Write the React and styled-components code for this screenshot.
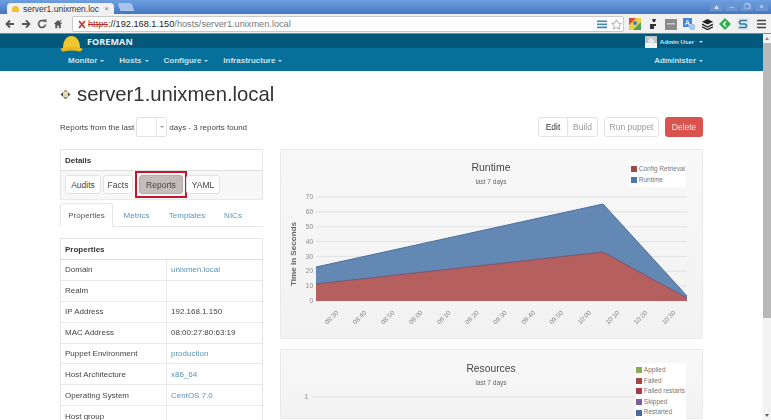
import React from 'react';
import styled, { createGlobalStyle } from 'styled-components';

const GlobalStyle = createGlobalStyle`
  html, body {
    margin: 0;
    height: 100%;
    overflow: hidden;
    background: #fff;
  }
  body {
    font-family: "Liberation Sans", Arial, sans-serif;
    color: #444;
  }
  * { box-sizing: border-box; }
`;

const Window = styled.div`
  width: 771px;
  height: 420px;
  display: flex;
  flex-direction: column;
  overflow: hidden;
  filter: blur(0.35px);
`;

const TabStrip = styled.div`
  height: 14px;
  flex: none;
  display: flex;
  align-items: flex-end;
  justify-content: space-between;
  padding-left: 7px;
  background: linear-gradient(#6e9fe0, #4577c0);
`;

const Tab = styled.div`
  width: 107px;
  height: 11px;
  padding: 0 5px;
  display: flex;
  align-items: center;
  gap: 4px;
  background: #f1f1f1;
  border-radius: 4px 4px 0 0;
  font-size: 8.5px;
  color: #333;
  white-space: nowrap;
  overflow: hidden;
`;

const Favicon = styled.span`
  width: 7px;
  height: 6px;
  flex: none;
  border-radius: 4px 4px 1px 1px;
  background: #f0c030;
`;

const TabTitle = styled.span`
  flex: 1;
  overflow: hidden;
`;

const TabClose = styled.span`
  color: #777;
  font-size: 8px;
`;

const NewTab = styled.div`
  width: 14px;
  height: 8px;
  margin-left: 5px;
  margin-bottom: 3px;
  background: #a9c4ec;
  border-radius: 2px 2px 0 0;
  transform: skewX(20deg);
`;

const TabGroup = styled.div`
  display: flex;
  align-items: flex-end;
`;

const WindowButtons = styled.div`
  display: flex;
  align-self: flex-start;
  gap: 2px;
  margin: 3px 3px 0 0;
`;

const WindowButton = styled.span`
  width: 13px;
  height: 8px;
  display: flex;
  align-items: center;
  justify-content: center;
  font-size: 7px;
  line-height: 8px;
  color: #dfe9f8;
  background: #6a94d2;
`;

const Toolbar = styled.div`
  height: 20px;
  flex: none;
  display: flex;
  align-items: center;
  padding: 1px 0 0 5px;
  background: #f1f1f1;
  border-bottom: 1px solid #6f8bb0;
`;

const NavIcons = styled.div`
  display: flex;
  align-items: center;
  gap: 6px;
  width: 67px;
  flex: none;
`;

const Omnibox = styled.div`
  width: 552px;
  height: 16px;
  flex: none;
  padding: 0 1px 0 5px;
  display: flex;
  align-items: center;
  background: #fff;
  border: 1px solid #c9c9c9;
  border-radius: 2px;
  font-size: 9.2px;
  white-space: nowrap;
`;

const Scheme = styled.span`
  color: #b03030;
  text-decoration: line-through;
  margin-left: 2px;
`;

const Host = styled.span`
  color: #222;
`;

const PathText = styled.span`
  color: #777;
  flex: 1;
`;

const OmniIcons = styled.div`
  display: flex;
  align-items: center;
  gap: 3px;
`;

const Extensions = styled.div`
  display: flex;
  align-items: center;
  padding-left: 2px;
`;

const ExtensionSlot = styled.span`
  width: 18px;
  display: flex;
  align-items: center;
  justify-content: center;
`;

const Body = styled.div`
  flex: 1;
  min-height: 0;
  display: flex;
`;

const Page = styled.div`
  flex: 1;
  min-width: 0;
  display: flex;
  flex-direction: column;
`;

const Scrollbar = styled.div`
  width: 8px;
  flex: none;
  display: flex;
  flex-direction: column;
  background: #f3f3f3;
`;

const ScrollArrow = styled.span`
  height: ${p => p.$h}px;
  flex: none;
  display: flex;
  align-items: center;
  justify-content: center;
`;

const ArrowGlyph = styled.span`
  width: 0;
  height: 0;
  border-left: 2.5px solid transparent;
  border-right: 2.5px solid transparent;
  ${p => (p.$up ? 'border-bottom: 3px solid #888;' : 'border-top: 3px solid #666;')}
`;

const ScrollThumb = styled.div`
  height: 275px;
  flex: none;
  background: #b9b9b9;
`;

const ScrollSpacer = styled.div`
  flex: 1;
`;

const TopBar = styled.div`
  height: 14px;
  flex: none;
  position: relative;
  display: flex;
  align-items: center;
  justify-content: space-between;
  padding: 0 60px 0 87px;
  background: #04587a;
  color: #e8f2f6;
  font-weight: bold;
`;

const Brand = styled.span`
  font-family: "Open Sans", sans-serif;
  font-size: 9px;
  letter-spacing: 0.1px;
`;

const HardHat = styled.svg`
  position: absolute;
  left: 60px;
  top: 1px;
  width: 23px;
  height: 19px;
`;

const UserMenu = styled.div`
  display: flex;
  align-items: center;
  font-size: 6.1px;
  gap: 3px;
  color: #cfe3ec;
`;

const Avatar = styled.span`
  width: 12px;
  height: 12px;
  margin-top: 1px;
  background: radial-gradient(circle at 50% 40%, #e6e6e6 28%, transparent 30%), linear-gradient(#bfc6c9 55%, #f2f2f2 55%);
`;

const Caret = styled.span`
  width: 0;
  height: 0;
  margin-left: ${p => p.$gap || 3}px;
  display: inline-block;
  vertical-align: middle;
  border-left: 2.5px solid transparent;
  border-right: 2.5px solid transparent;
  border-top: 2.5px solid ${p => p.$color || 'currentColor'};
`;

const NavBar = styled.div`
  height: 23px;
  flex: none;
  display: flex;
  align-items: center;
  justify-content: space-between;
  padding: 2px 60px 0 68px;
  background: #06709b;
  font-size: 8px;
  font-weight: bold;
  color: #c9e0ea;
`;

const NavGroup = styled.div`
  display: flex;
  gap: 15px;
`;

const Content = styled.div`
  flex: 1;
  min-height: 0;
  padding: 0 60px;
  overflow: hidden;
`;

const TitleRow = styled.h1`
  margin: 0;
  height: 41px;
  padding-top: 5px;
  display: flex;
  align-items: center;
  gap: 6px;
  font-size: 20.3px;
  font-weight: normal;
  color: #333;
`;

const HostIcon = styled.svg`
  width: 11px;
  height: 11px;
  flex: none;
`;

const ActionRow = styled.div`
  height: 30px;
  margin-bottom: 7px;
  display: flex;
  align-items: center;
  justify-content: space-between;
  font-size: 8px;
  color: #444;
`;

const Filter = styled.div`
  display: flex;
  align-items: center;
  gap: 2px;
`;

const DaysSelect = styled.div`
  width: 31px;
  height: 20px;
  display: flex;
  justify-content: flex-end;
  background: #fff;
  border: 1px solid #e2e2e2;
  border-radius: 2px;
`;

const DaysArrow = styled.span`
  width: 10px;
  display: flex;
  align-items: center;
  justify-content: center;
  border-left: 1px solid #e6e6e6;
  color: #999;
`;

const Actions = styled.div`
  display: flex;
  gap: 6px;
`;

const ButtonGroup = styled.div`
  display: flex;
  height: 20px;
  border: 1px solid #e2e2e2;
  border-radius: 3px;
`;

const ActionButton = styled.span`
  width: ${p => p.$w}px;
  display: flex;
  align-items: center;
  justify-content: center;
  font-size: 8.5px;
  color: ${p => (p.$dim ? '#999' : '#333')};
  & + & { border-left: 1px solid #e2e2e2; }
`;

const DeleteButton = styled.span`
  height: 20px;
  width: 38px;
  display: flex;
  align-items: center;
  justify-content: center;
  font-size: 8.5px;
  color: #fbe3e2;
  background: #d9534f;
  border-radius: 3px;
`;

const Columns = styled.div`
  display: flex;
  gap: 17px;
`;

const LeftColumn = styled.div`
  width: 203px;
  flex: none;
`;

const RightColumn = styled.div`
  width: 423px;
  flex: none;
  display: flex;
  flex-direction: column;
  gap: 10px;
`;

const DetailsPanel = styled.div`
  border: 1px solid #e6e6e6;
  border-bottom: 0;
`;

const DetailsHeader = styled.div`
  height: 21px;
  padding: 0 4px;
  display: flex;
  align-items: center;
  font-size: 8px;
  font-weight: bold;
  color: #333;
  border-bottom: 1px solid #ddd;
`;

const DetailsButtons = styled.div`
  height: 29px;
  padding: 4px;
  display: flex;
  background: #f7f7f7;
  border-bottom: 1px solid #eaeaea;
`;

const SmallButton = styled.span`
  height: 19px;
  position: relative;
  display: flex;
  align-items: center;
  justify-content: center;
  width: ${p => p.$w}px;
  margin-right: ${p => p.$gap || 0}px;
  font-size: 8.5px;
  color: #444;
  background: #fff;
  border: 1px solid #e2e2e2;
  border-radius: 3px;
  ${p => p.$active && `
    background: #c4bcbc;
    border-color: #b5adad;
    &::after {
      content: '';
      position: absolute;
      inset: -5px;
      border: 2.5px solid #c5162e;
    }
  `}
`;

const Tabs = styled.div`
  height: 24px;
  margin-top: 3px;
  display: flex;
  font-size: 8px;
  border-bottom: 1px solid #e6e6e6;
`;

const TabItem = styled.span`
  height: 24px;
  width: ${p => p.$w}px;
  display: flex;
  align-items: center;
  justify-content: center;
  color: ${p => (p.$active ? '#555' : '#5a93b8')};
  ${p => p.$active && `
    background: #fff;
    border: 1px solid #e6e6e6;
    border-bottom-color: #fff;
    border-radius: 3px 3px 0 0;
  `}
`;

const PropsTable = styled.div`
  margin-top: 11px;
  border: 1px solid #e6e6e6;
  border-bottom: 0;
  font-size: 8px;
`;

const PropsHeader = styled.div`
  height: 21px;
  padding: 0 4px;
  display: flex;
  align-items: center;
  font-weight: bold;
  color: #333;
  border-bottom: 1px solid #ddd;
`;

const PropRow = styled.div`
  height: 20.9px;
  display: grid;
  grid-template-columns: 106px 1fr;
  align-items: center;
  border-bottom: 1px solid #e9e9e9;
  color: #444;
`;

const PropName = styled.span`
  height: 100%;
  padding-left: 4px;
  display: flex;
  align-items: center;
  border-right: 1px solid #e9e9e9;
`;

const PropValue = styled.span`
  padding-left: 4px;
  color: ${p => (p.$link ? '#5a93b8' : '#444')};
`;

const ChartCard = styled.div`
  height: ${p => p.$h}px;
  flex: none;
  position: relative;
  background: linear-gradient(#f8f8f8, #f2f2f2);
  border: 1px solid #e9e9e9;
  border-radius: 2px;
`;

const ChartSvg = styled.svg`
  display: block;
  width: 421px;
  height: 100%;
  font-family: "Liberation Sans", Arial, sans-serif;
`;

const Legend = styled.div`
  position: absolute;
  top: ${p => p.$top}px;
  right: 16px;
  padding: 2px 1px;
  background: #fff;
  font-size: 6.5px;
  line-height: 10.6px;
  color: #777;
`;

const LegendRow = styled.div`
  display: flex;
  align-items: center;
  gap: 2px;
`;

const Swatch = styled.span`
  width: 6px;
  height: 6px;
  background: ${p => p.$color};
`;

const Link = styled.a`
  color: inherit;
  text-decoration: none;
`;

const NAV_LEFT = ['Monitor', 'Hosts', 'Configure', 'Infrastructure'];

const PROPS = [
  ['Domain', 'unixmen.local', true],
  ['Realm', ''],
  ['IP Address', '192.168.1.150'],
  ['MAC Address', '08:00:27:80:63:19'],
  ['Puppet Environment', 'production', true],
  ['Host Architecture', 'x86_64', true],
  ['Operating System', 'CentOS 7.0', true],
  ['Host group', ''],
];

const TICKS = ['08:30', '08:40', '08:50', '09:00', '09:10', '09:20', '09:30', '09:40', '09:50', '10:00', '10:10', '10:20', '10:30'];

function BackIcon({ flip }) {
  return (
    <svg width="10" height="10" viewBox="0 0 10 10" style={flip ? { transform: 'scaleX(-1)' } : undefined}>
      <path d="M9 5H2M5 1.5 1.5 5 5 8.5" fill="none" stroke="#555" strokeWidth="1.8" />
    </svg>
  );
}

function ReloadIcon() {
  return (
    <svg width="10" height="10" viewBox="0 0 10 10">
      <path d="M8.5 5.5A3.5 3.5 0 1 1 7.5 2.5" fill="none" stroke="#555" strokeWidth="1.6" />
      <path d="M6 0.5h3.5V4z" fill="#555" />
    </svg>
  );
}

function HomeIcon() {
  return (
    <svg width="10" height="10" viewBox="0 0 10 10">
      <path d="M5 1 0.8 5H2.3V9.3H4.2V6.5H5.8V9.3H7.7V5H9.2zM7 1.2H8.2V3.2L7 2.2z" fill="#555" />
    </svg>
  );
}

function ToolbarExtensions() {
  return (
    <Extensions>
      <ExtensionSlot>
        <svg width="12" height="12" viewBox="0 0 12 12">
          <rect width="12" height="12" fill="#e8d24a" />
          <path d="M0 0h7L0 7z" fill="#d9483b" />
          <path d="M12 12H4l8-8z" fill="#4aa656" />
          <circle cx="6" cy="5" r="2" fill="#4a78c9" />
        </svg>
      </ExtensionSlot>
      <ExtensionSlot>
        <svg width="10" height="12" viewBox="0 0 10 12">
          <path d="M4 1h4L7 4H5zM2 6h6v2H6v3H2V8z" fill="#333" />
        </svg>
      </ExtensionSlot>
      <ExtensionSlot>
        <svg width="12" height="11" viewBox="0 0 12 11">
          <rect width="12" height="11" fill="#8b8b8b" />
          <rect x="2" y="4" width="8" height="1.5" fill="#c9c9c9" />
        </svg>
      </ExtensionSlot>
      <ExtensionSlot>
        <svg width="12" height="12" viewBox="0 0 12 12">
          <path d="M0 0h9v9H0z" fill="#4a86d8" />
          <path d="M5 6h7v6H7z" fill="#a9c6ee" />
          <path d="M2.5 7 4.5 2l2 5M3.3 5.5h2.4" fill="none" stroke="#fff" strokeWidth=".9" />
        </svg>
      </ExtensionSlot>
      <ExtensionSlot>
        <svg width="11" height="11" viewBox="0 0 11 11">
          <path d="M5.5 0 11 2.7 5.5 5.4 0 2.7z" fill="#222" />
          <path d="M0 5.2 5.5 8 11 5.2M0 7.8l5.5 2.8L11 7.8" fill="none" stroke="#222" strokeWidth="1.3" />
        </svg>
      </ExtensionSlot>
      <ExtensionSlot>
        <svg width="12" height="12" viewBox="0 0 12 12">
          <path d="M6 0 12 6 6 12 0 6z" fill="#2fae55" />
          <path d="M7 3.5 4.5 6 7 8.5" fill="none" stroke="#fff" strokeWidth="1.3" />
        </svg>
      </ExtensionSlot>
      <ExtensionSlot>
        <svg width="12" height="12" viewBox="0 0 12 12">
          <rect width="12" height="12" fill="#dfe7ec" />
          <path d="M10 2.5H4.5Q2.5 2.5 2.5 4.3T4.5 6H7.5Q9.5 6 9.5 7.8T7.5 9.5H2" fill="none" stroke="#2e7da3" strokeWidth="1.6" />
        </svg>
      </ExtensionSlot>
      <ExtensionSlot>
        <svg width="9" height="10" viewBox="0 0 9 10">
          <path d="M0 1.5h9M0 5h9M0 8.5h9" stroke="#444" strokeWidth="1.7" />
        </svg>
      </ExtensionSlot>
    </Extensions>
  );
}

function RuntimeChart() {
  const toY = v => 47 + (70 - v) * 1.485;
  const tickX = i => 52 + i * 28.1;
  return (
    <ChartSvg viewBox="0 0 421 188">
      <text x="210" y="21" textAnchor="middle" fontSize="10.5" fill="#444">Runtime</text>
      <text x="210" y="34" textAnchor="middle" fontSize="6.5" fill="#666">last 7 days</text>
      {[70, 60, 50, 40, 30, 20, 10, 0].map(v => (
        <g key={v}>
          <line x1="35" x2="406" y1={toY(v)} y2={toY(v)} stroke="#dcdcdc" strokeWidth="0.8" />
          <text x="32" y={toY(v) + 2.2} textAnchor="end" fontSize="6.5" fill="#888">{v}</text>
        </g>
      ))}
      <path d="M35 117 L322 54 L406 146 V151 H35 Z" fill="#6388b4" />
      <path d="M35 117 L322 54 L406 146" fill="none" stroke="#4a6f9e" strokeWidth="1" />
      <path d="M35 134 L322 102 L406 148 V151 H35 Z" fill="#b5605e" />
      <path d="M35 134 L322 102 L406 148" fill="none" stroke="#7d5570" strokeWidth="1" />
      <text transform="translate(15 104) rotate(-90)" textAnchor="middle" fontSize="8.1" fontWeight="bold" fill="#666">Time in Seconds</text>
      {TICKS.map((t, i) => (
        <text key={t} transform={`translate(${tickX(i)} 169) rotate(-45)`} textAnchor="middle" fontSize="6.5" fill="#888">{t}</text>
      ))}
    </ChartSvg>
  );
}

function ResourcesChart() {
  return (
    <ChartSvg viewBox="0 0 421 68">
      <text x="210" y="22" textAnchor="middle" fontSize="10.3" fill="#444">Resources</text>
      <text x="210" y="35" textAnchor="middle" fontSize="6.5" fill="#666">last 7 days</text>
      <line x1="31" x2="406" y1="47" y2="47" stroke="#d8d8d8" strokeWidth="0.8" />
      <text x="27" y="49" textAnchor="end" fontSize="6.5" fill="#888">1</text>
    </ChartSvg>
  );
}

export default function App() {
  return (
    <Window>
      <GlobalStyle />
      <TabStrip>
        <TabGroup>
          <Tab>
            <Favicon />
            <TabTitle>server1.unixmen.loc</TabTitle>
            <TabClose>×</TabClose>
          </Tab>
          <NewTab />
        </TabGroup>
        <WindowButtons>
          <WindowButton>▲</WindowButton>
          <WindowButton>–</WindowButton>
          <WindowButton>❐</WindowButton>
          <WindowButton>×</WindowButton>
        </WindowButtons>
      </TabStrip>
      <Toolbar>
        <NavIcons>
          <BackIcon />
          <BackIcon flip />
          <ReloadIcon />
          <HomeIcon />
        </NavIcons>
        <Omnibox>
          <svg width="8" height="9" viewBox="0 0 8 9">
            <rect x="1" y="1" width="6" height="7" fill="#ddd" />
            <path d="M1 1l6 7M7 1 1 8" stroke="#b03030" strokeWidth="1.2" />
          </svg>
          <Scheme>https</Scheme>
          <Host>://192.168.1.150</Host>
          <PathText>/hosts/server1.unixmen.local</PathText>
          <OmniIcons>
            <svg width="11" height="9" viewBox="0 0 11 9">
              <path d="M0 1.2h10M0 4.2h10M0 7.4h10" stroke="#3d86b8" strokeWidth="1.6" />
            </svg>
            <svg width="11" height="11" viewBox="0 0 11 11">
              <path d="M5.5.8 7 4l3.4.4-2.5 2.3.7 3.4-3.1-1.7-3 1.7.6-3.4L.6 4.4 4 4z" fill="#fff" stroke="#999" strokeWidth=".8" />
            </svg>
          </OmniIcons>
        </Omnibox>
        <ToolbarExtensions />
      </Toolbar>
      <Body>
        <Page>
          <TopBar>
            <HardHat viewBox="0 0 23 19">
              <path d="M3 13C3 5 7 1 11.5 1S20 5 20 13z" fill="#f2c62f" />
              <path d="M0.5 13.5Q11.5 10 22.5 13.5Q22 16 20 16.5Q11.5 14.5 3 16.5Q1 16 .5 13.5z" fill="#e9b91f" />
            </HardHat>
            <Brand>FOREMAN</Brand>
            <UserMenu>
              <Avatar />
              <span>Admin User<Caret $gap={5} /></span>
            </UserMenu>
          </TopBar>
          <NavBar>
            <NavGroup>
              {NAV_LEFT.map(item => (
                <span key={item}>{item}<Caret /></span>
              ))}
            </NavGroup>
            <span>Administer<Caret /></span>
          </NavBar>
          <Content>
            <TitleRow>
              <HostIcon viewBox="0 0 11 11">
                <path d="M5.5 0.5 8 3.2H3z" fill="#c79a3a" />
                <path d="M5.5 10.5 3 7.8H8z" fill="#8a7a4a" />
                <path d="M0.5 5.5 3.2 3V8z" fill="#444" />
                <path d="M10.5 5.5 7.8 8V3z" fill="#555" />
                <rect x="4" y="4" width="3" height="3" fill="#e9d9a8" />
              </HostIcon>
              server1.unixmen.local
            </TitleRow>
            <ActionRow>
              <Filter>
                Reports from the last
                <DaysSelect>
                  <DaysArrow><Caret $gap={0.1} $color="#999" /></DaysArrow>
                </DaysSelect>
                days - 3 reports found
              </Filter>
              <Actions>
                <ButtonGroup>
                  <ActionButton $w={28}>Edit</ActionButton>
                  <ActionButton $w={30} $dim>Build</ActionButton>
                </ButtonGroup>
                <ButtonGroup>
                  <ActionButton $w={53} $dim>Run puppet</ActionButton>
                </ButtonGroup>
                <DeleteButton>Delete</DeleteButton>
              </Actions>
            </ActionRow>
            <Columns>
              <LeftColumn>
                <DetailsPanel>
                  <DetailsHeader>Details</DetailsHeader>
                  <DetailsButtons>
                    <SmallButton $w={36} $gap={2}>Audits</SmallButton>
                    <SmallButton $w={30} $gap={6}>Facts</SmallButton>
                    <SmallButton $w={44} $gap={3} $active>Reports</SmallButton>
                    <SmallButton $w={34}>YAML</SmallButton>
                  </DetailsButtons>
                </DetailsPanel>
                <Tabs>
                  <TabItem $w={53} $active>Properties</TabItem>
                  <TabItem $w={47}>Metrics</TabItem>
                  <TabItem $w={54}>Templates</TabItem>
                  <TabItem $w={38}>NICs</TabItem>
                </Tabs>
                <PropsTable>
                  <PropsHeader>Properties</PropsHeader>
                  {PROPS.map(([name, value, link]) => (
                    <PropRow key={name}>
                      <PropName>{name}</PropName>
                      <PropValue $link={link}>{link ? <Link href="#">{value}</Link> : value}</PropValue>
                    </PropRow>
                  ))}
                </PropsTable>
              </LeftColumn>
              <RightColumn>
                <ChartCard $h={190}>
                  <RuntimeChart />
                  <Legend $top={12}>
                    <LegendRow><Swatch $color="#a04a48" />Config Retrieval</LegendRow>
                    <LegendRow><Swatch $color="#4a78a8" />Runtime</LegendRow>
                  </Legend>
                </ChartCard>
                <ChartCard $h={70}>
                  <ResourcesChart />
                  <Legend $top={13}>
                    <LegendRow><Swatch $color="#8fa85a" />Applied</LegendRow>
                    <LegendRow><Swatch $color="#a04a48" />Failed</LegendRow>
                    <LegendRow><Swatch $color="#a83c44" />Failed restarts</LegendRow>
                    <LegendRow><Swatch $color="#7a5f9a" />Skipped</LegendRow>
                    <LegendRow><Swatch $color="#4a6a9e" />Restarted</LegendRow>
                  </Legend>
                </ChartCard>
              </RightColumn>
            </Columns>
          </Content>
        </Page>
        <Scrollbar>
          <ScrollArrow $h={9}><ArrowGlyph $up /></ScrollArrow>
          <ScrollThumb />
          <ScrollSpacer />
          <ScrollArrow $h={9}><ArrowGlyph /></ScrollArrow>
        </Scrollbar>
      </Body>
    </Window>
  );
}
